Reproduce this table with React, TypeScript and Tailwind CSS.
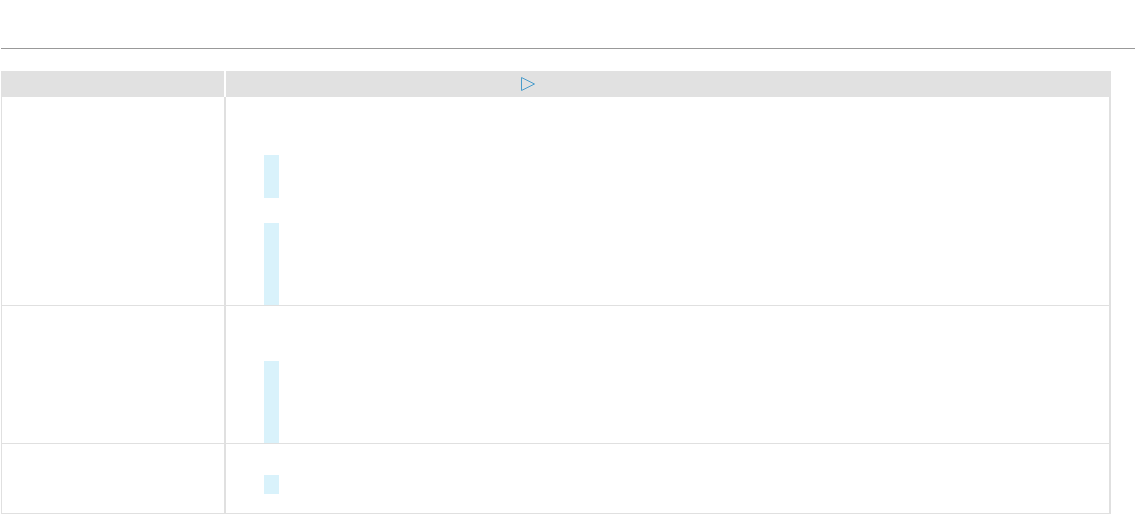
import React from 'react';

const PlayIcon = (props: React.SVGProps<SVGSVGElement>) => (
    <svg viewBox="0 0 16 16" fill="none" stroke="currentColor" strokeWidth={1} {...props}>
        <path d="M1.5 1.5 L14.5 8 L1.5 14.5 Z" strokeLinejoin="round" />
    </svg>
);

const Bar = ({ className }: { className: string }) => (
    <div className={`ml-[38px] w-[15px] bg-[#d9f2fb] ${className}`} />
);

const App: React.FC = () => {
    return (
        <div className="w-[1136px] h-[515px] bg-white font-['Liberation_Sans',sans-serif] text-sm text-gray-800">
            <div className="h-12" />
            <div className="ml-px w-[1134px] h-px bg-[#999999]" />
            <div className="h-[22px]" />

            <div className="ml-px w-[1110px]">
                {/* header */}
                <div className="flex h-[26px] gap-[2px]">
                    <div className="w-[223px] bg-[#e1e1e1]" />
                    <div className="flex flex-1 items-center bg-[#e1e1e1] pl-[294px]">
                        <PlayIcon className="w-4 h-4 text-[#4a9ccb]" />
                    </div>
                </div>

                {/* body */}
                <div className="border-l border-r-2 border-[#e0e0e0]">
                    <div className="flex h-[209px] border-b border-[#e0e0e0]">
                        <div className="w-[222px]" />
                        <div className="flex-1 border-l-2 border-[#e0e0e0] pt-[58px]">
                            <Bar className="h-[43px]" />
                            <Bar className="h-[82px] mt-[25px]" />
                        </div>
                    </div>
                    <div className="flex h-[138px] border-b border-[#e0e0e0]">
                        <div className="w-[222px]" />
                        <div className="flex-1 border-l-2 border-[#e0e0e0] pt-[55px]">
                            <Bar className="h-[82px]" />
                        </div>
                    </div>
                    <div className="flex h-[70px] border-b border-[#e0e0e0]">
                        <div className="w-[222px]" />
                        <div className="flex-1 border-l-2 border-[#e0e0e0] pt-[31px]">
                            <Bar className="h-[19px]" />
                        </div>
                    </div>
                </div>
            </div>
        </div>
    );
};

export default App;
